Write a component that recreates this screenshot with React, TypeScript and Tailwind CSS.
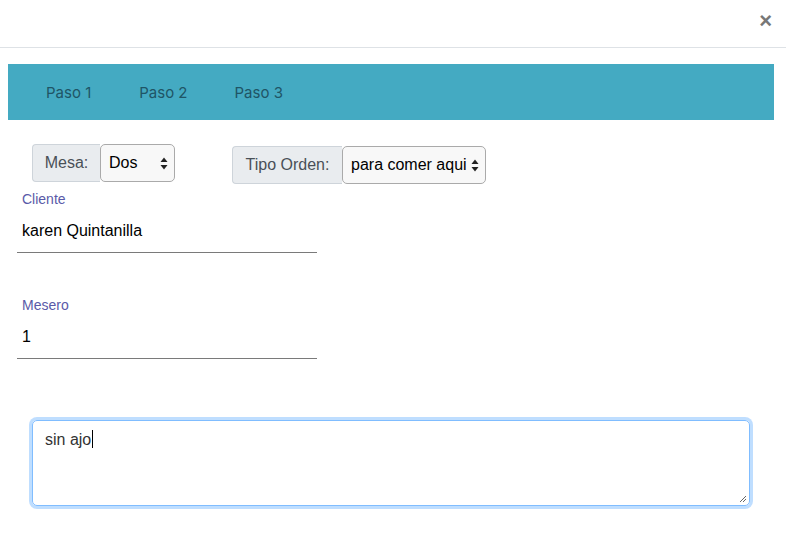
import React from "react";

function SelectArrows() {
  return (
    <svg width="8" height="13" viewBox="0 0 8 13" className="text-[#222]">
      <path d="M4 0.5 L7.5 5 L0.5 5 Z" fill="currentColor" />
      <path d="M4 12.5 L7.5 8 L0.5 8 Z" fill="currentColor" />
    </svg>
  );
}

function FieldGroup({
  label,
  value,
  labelWidth,
  selectWidth,
}: {
  label: string;
  value: string;
  labelWidth: string;
  selectWidth: string;
}) {
  return (
    <div className="flex h-[38px]">
      <div
        className={`${labelWidth} flex items-center justify-center rounded-l-[4px] border border-r-0 border-[#ced4da] bg-[#e9ecef] text-[16px] text-[#495057]`}
      >
        {label}
      </div>
      <div
        className={`${selectWidth} flex items-center justify-between rounded-[5px] border border-[#aaa] bg-[#f8f8f8] pl-[8px] pr-[6px] text-[16px] text-black`}
      >
        <span>{value}</span>
        <SelectArrows />
      </div>
    </div>
  );
}

function UnderlineInput({ label, value }: { label: string; value: string }) {
  return (
    <div className="w-[300px]">
      <div className="pl-[5px] text-[14px] leading-[16px] text-[#5a5aa8]">{label}</div>
      <div className="mt-[8px] flex h-[38px] items-start border-b border-[#7a7a7a] pl-[5px] pt-[6px] text-[16px] leading-[20px] text-black">
        {value}
      </div>
    </div>
  );
}

export default function App() {
  return (
    <div
      className="h-[543px] w-[786px] overflow-hidden bg-white"
      style={{ fontFamily: '"Liberation Sans", Helvetica, Arial, sans-serif' }}
    >
      <div className="flex h-[48px] items-start justify-end border-b border-[#dee2e6] pr-[14px] pt-[11px]">
        <button type="button" className="text-[22px] font-bold leading-[20px] text-[#777]">
          ×
        </button>
      </div>

      <div
        className="mx-[8px] mt-[16px] flex h-[56px] w-[766px] items-center bg-[#44aac2] pl-[38px] pt-[2px] text-[15px] text-[#1f5566]"
        style={{ fontFamily: 'Inter, "Liberation Sans", sans-serif' }}
      >
        <span>Paso 1</span>
        <span className="ml-[48px]">Paso 2</span>
        <span className="ml-[47px]">Paso 3</span>
      </div>

      <div className="mt-[24px] flex items-start pl-[32px]">
        <FieldGroup label="Mesa:" value="Dos" labelWidth="w-[68px]" selectWidth="w-[75px]" />
        <div className="ml-[57px] mt-[2px]">
          <FieldGroup
            label="Tipo Orden:"
            value="para comer aqui"
            labelWidth="w-[110px]"
            selectWidth="w-[144px]"
          />
        </div>
      </div>

      <div className="pl-[17px] pt-[7px]">
        <UnderlineInput label="Cliente" value="karen Quintanilla" />
        <div className="mt-[44px]">
          <UnderlineInput label="Mesero" value="1" />
        </div>
      </div>

      <div className="ml-[32px] mt-[61px] h-[86px] w-[718px]">
        <div className="relative h-full w-full rounded-[5px] border border-[#80bdff] px-[12px] pt-[6px] text-[16px] leading-[24px] text-[#333] shadow-[0_0_0_3px_rgba(0,123,255,0.25)]">
          <span>sin ajo</span>
          <span className="ml-[1px] inline-block h-[18px] w-px translate-y-[3px] bg-black" />
          <svg
            width="9"
            height="9"
            viewBox="0 0 9 9"
            className="absolute bottom-[2px] right-[2px] text-[#666]"
          >
            <path d="M8 2 L2 8 M8 5 L5 8" stroke="currentColor" strokeWidth="1" />
          </svg>
        </div>
      </div>
    </div>
  );
}
